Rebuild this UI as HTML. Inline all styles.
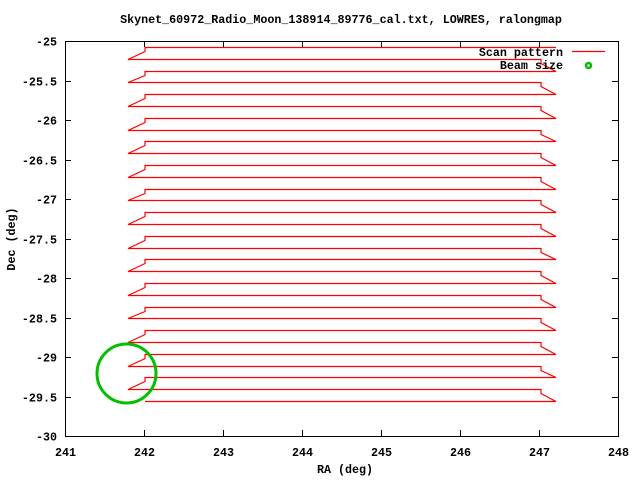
<!DOCTYPE html>
<html><head><meta charset="utf-8"><style>
html,body{margin:0;padding:0;background:#fff;width:640px;height:480px;overflow:hidden}
svg text{font-family:"Liberation Mono","DejaVu Sans Mono",monospace;font-weight:bold;font-size:11.7px;fill:#000}
</style></head><body>
<svg id="s" width="640" height="480" xmlns="http://www.w3.org/2000/svg">
<rect width="640" height="480" fill="#fff"/>
<text x="341" y="23" text-anchor="middle">Skynet_60972_Radio_Moon_138914_89776_cal.txt, LOWRES, ralongmap</text>
<g id="ax" stroke="#000" stroke-width="1" fill="none">
<rect x="65.5" y="41.5" width="553" height="395"/>
</g>
<g id="lab"></g>
<text x="345" y="473" text-anchor="middle">RA (deg)</text>
<text transform="translate(15,239) rotate(-90)" text-anchor="middle">Dec (deg)</text>
<polyline id="scan" fill="none" stroke="#ff0000" stroke-width="1.2"/>
<circle cx="126.5" cy="373.5" r="29.5" fill="none" stroke="#00c000" stroke-width="3"/>
<text x="563" y="56" text-anchor="end">Scan pattern</text>
<line x1="572" y1="51.5" x2="605" y2="51.5" stroke="#ff0000" stroke-width="1.2"/>
<text x="563" y="69" text-anchor="end">Beam size</text>
<circle cx="588.5" cy="65.5" r="2.5" fill="none" stroke="#00c000" stroke-width="2.5"/>
</svg>
<script>
var ns="http://www.w3.org/2000/svg";
var ax=document.getElementById("ax"),lab=document.getElementById("lab");
function L(x1,y1,x2,y2){var l=document.createElementNS(ns,"line");l.setAttribute("x1",x1);l.setAttribute("y1",y1);l.setAttribute("x2",x2);l.setAttribute("y2",y2);ax.appendChild(l);}
function T(x,y,s,a){var t=document.createElementNS(ns,"text");t.setAttribute("x",x);t.setAttribute("y",y);t.setAttribute("text-anchor",a);t.textContent=s;lab.appendChild(t);}
for(var i=0;i<=7;i++){var x=Math.round(65+i*79)+0.5;L(x,41,x,47);L(x,436,x,430);T(x,456,String(241+i),"middle");}
var yl=["-25","-25.5","-26","-26.5","-27","-27.5","-28","-28.5","-29","-29.5","-30"];
for(var j=0;j<=10;j++){var y=Math.round(41+j*39.5)+0.5;L(65,y,71,y);L(618,y,612,y);T(57,y+4,yl[j],"end");}
var pts=[];var dy=11.8;
function R(v){return Math.round(v)+0.5;}
for(var r=0;r<31;r++){var y=R(47+r*dy), yn=R(47+(r+1)*dy);
 if(r%2==0){
   pts.push([556,y]);pts.push([145,y]);
   if(r<30){pts.push([145,y+4]);pts.push([128,yn]);}
 } else {
   pts.push([128,y]);pts.push([541,y]);pts.push([541,y+4]);
 }
}
document.getElementById("scan").setAttribute("points",pts.map(function(p){return p[0]+","+p[1]}).join(" "));
</script>
</body></html>
